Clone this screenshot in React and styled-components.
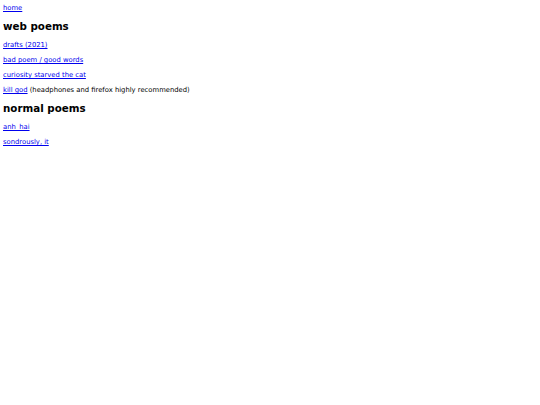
import React from "react";
import styled, { createGlobalStyle } from "styled-components";

const Global = createGlobalStyle`
  body {
    margin: 4px 3px 3px 3px;
    font-family: "DejaVu Sans", sans-serif;
    font-size: 6.8px;
    color: #000;
    background: #fff;
  }
`;

const Page = styled.div``;

const Para = styled.p`
  margin: 7px 0;
  line-height: 8px;
  &:first-child {
    margin-top: 0;
  }
`;

const Heading = styled.h2`
  font-size: 10.3px;
  line-height: 12px;
  font-weight: bold;
  margin: 7.5px 0 9.5px 0;
`;

const Link = styled.a`
  color: #0000ee;
  text-decoration: underline;
`;

export default function App() {
  return (
    <Page>
      <Global />
      <Para><Link href="#">home</Link></Para>
      <Heading>web poems</Heading>
      <Para><Link href="#">drafts (2021)</Link></Para>
      <Para><Link href="#">bad poem / good words</Link></Para>
      <Para><Link href="#">curiosity starved the cat</Link></Para>
      <Para><Link href="#">kill god</Link> (headphones and firefox highly recommended)</Para>
      <Heading>normal poems</Heading>
      <Para><Link href="#">anh_hai</Link></Para>
      <Para><Link href="#">sondrously, it</Link></Para>
    </Page>
  );
}
